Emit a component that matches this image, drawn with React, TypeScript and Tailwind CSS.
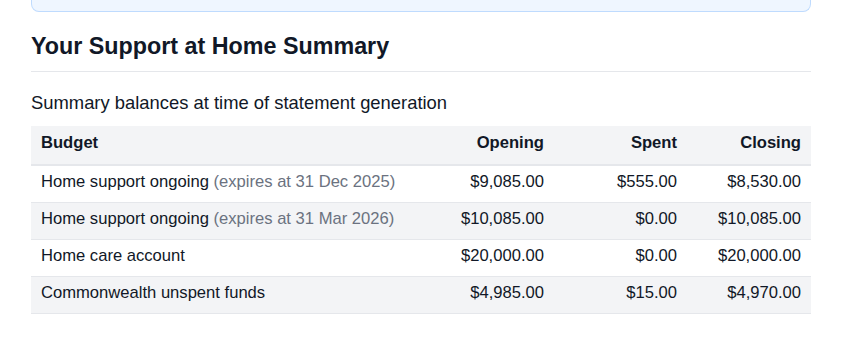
const rows = [
  { name: "Home support ongoing", note: "(expires at 31 Dec 2025)", opening: "$9,085.00", spent: "$555.00", closing: "$8,530.00" },
  { name: "Home support ongoing", note: "(expires at 31 Mar 2026)", opening: "$10,085.00", spent: "$0.00", closing: "$10,085.00" },
  { name: "Home care account", note: "", opening: "$20,000.00", spent: "$0.00", closing: "$20,000.00" },
  { name: "Commonwealth unspent funds", note: "", opening: "$4,985.00", spent: "$15.00", closing: "$4,970.00" },
];

export default function App() {
  return (
    <div className="min-h-[339px] bg-white pl-[31px] pr-[34px] text-[#111827]" style={{ fontFamily: '"Liberation Sans", Arial, sans-serif' }}>
      {/* tail of the notice box above */}
      <div className="h-[12px] rounded-b-lg border-x border-b border-[#bfdbfe] bg-[#eff6ff]" />

      <h2 className="mt-[20px] border-b border-[#e5e7eb] pb-[11px] text-[23.3px] font-bold leading-[28px]">
        Your Support at Home Summary
      </h2>

      <p className="mt-[19px] mb-[11px] text-[18.4px] leading-[24px]">
        Summary balances at time of statement generation
      </p>

      <table className="w-full table-fixed border-collapse text-[16.6px] leading-[20px]">
        <colgroup>
          <col />
          <col className="w-[140px]" />
          <col className="w-[133px]" />
          <col className="w-[124px]" />
        </colgroup>
        <thead>
          <tr className="border-b-2 border-[#e5e7eb] bg-[#f3f4f6]">
            <th className="px-[10px] pt-[7px] pb-[11px] text-left font-bold">Budget</th>
            <th className="px-[10px] pt-[7px] pb-[11px] text-right font-bold">Opening</th>
            <th className="px-[10px] pt-[7px] pb-[11px] text-right font-bold">Spent</th>
            <th className="px-[10px] pt-[7px] pb-[11px] text-right font-bold">Closing</th>
          </tr>
        </thead>
        <tbody>
          {rows.map((r, i) => (
            <tr key={i} className={`border-b border-[#e5e7eb] ${i % 2 === 1 ? "bg-[#f3f4f6]" : "bg-white"}`}>
              <td className="px-[10px] pt-[6px] pb-[10px]">
                {r.name}
                {r.note && <span className="text-[#6b7280]"> {r.note}</span>}
              </td>
              <td className="px-[10px] pt-[6px] pb-[10px] text-right">{r.opening}</td>
              <td className="px-[10px] pt-[6px] pb-[10px] text-right">{r.spent}</td>
              <td className="px-[10px] pt-[6px] pb-[10px] text-right">{r.closing}</td>
            </tr>
          ))}
        </tbody>
      </table>
    </div>
  );
}
